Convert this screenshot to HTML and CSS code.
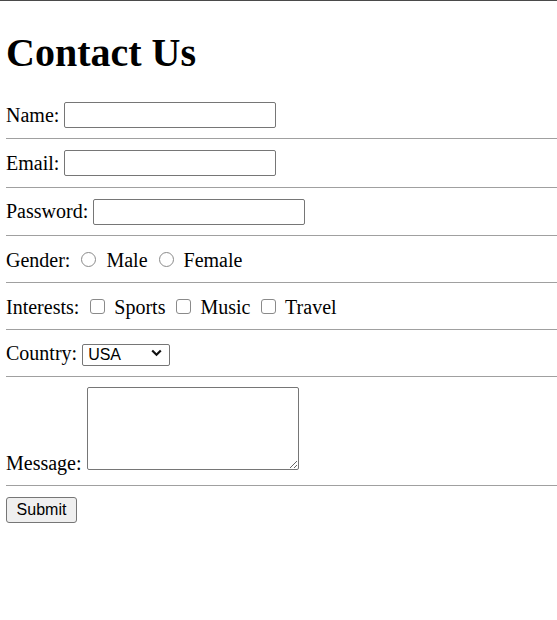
FILE: index.html
```html
<!DOCTYPE html>
<html lang="en">
<head>
<meta charset="utf-8">
<title>Contact Us</title>
<link rel="stylesheet" href="styles.css">
</head>
<body>
<h1 class="title">Contact Us</h1>
<form class="form">
  <div class="row row-name">
    <label class="lbl" for="name">Name:</label>
    <input class="text" id="name" type="text">
  </div>
  <div class="row row-email">
    <label class="lbl" for="email">Email:</label>
    <input class="text" id="email" type="email">
  </div>
  <div class="row row-pass">
    <label class="lbl" for="pw">Password:</label>
    <input class="text" id="pw" type="password">
  </div>
  <div class="row row-gender">
    <span class="lbl">Gender:</span>
    <label class="opt"><input class="radio" type="radio" name="g"> Male</label>
    <label class="opt"><input class="radio" type="radio" name="g"> Female</label>
  </div>
  <div class="row row-int">
    <span class="lbl">Interests:</span>
    <label class="opt"><input class="check" type="checkbox"> Sports</label>
    <label class="opt"><input class="check" type="checkbox"> Music</label>
    <label class="opt"><input class="check" type="checkbox"> Travel</label>
  </div>
  <div class="row row-country">
    <label class="lbl" for="country">Country:</label>
    <span class="select-wrap">
      <select class="select" id="country">
        <option>USA</option>
        <option>Canada</option>
        <option>UK</option>
      </select>
      <svg class="chev" width="11" height="8" viewBox="0 0 11 8"><path d="M1.2 1.5 L5.5 5.8 L9.8 1.5" fill="none" stroke="#111" stroke-width="2.2"/></svg>
    </span>
  </div>
  <div class="row row-msg">
    <label class="lbl lbl-msg" for="msg">Message:</label>
    <textarea class="area" id="msg"></textarea>
  </div>
  <button class="btn" type="submit">Submit</button>
</form>
</body>
</html>
```
FILE: styles.css
```css
html {
  background: #fff;
}
body {
  margin: 0;
  border-top: 1px solid #4a4a4a;
  padding-left: 6px;
  font-family: "Liberation Serif", "Times New Roman", serif;
  font-size: 20px;
  color: #000;
}
.title {
  margin: 29px 0 16px;
  font-size: 40px;
  font-weight: bold;
  line-height: 46px;
}
.form {
  margin: 0;
}
.row {
  box-sizing: border-box;
  display: flex;
  align-items: center;
  border-bottom: 1px solid #a0a0a0;
}
.row-name { height: 47px; }
.row-email { height: 49px; }
.row-pass { height: 48px; }
.row-gender { height: 47px; padding-top: 2px; }
.row-int { height: 47px; padding-top: 2px; }
.row-country { height: 47px; }
.row-msg {
  height: 109px;
  align-items: flex-end;
  padding: 9px 0 15px;
}
.lbl {
  line-height: 23px;
  white-space: pre;
}
.lbl-msg {
  margin-bottom: -5px;
}
.opt {
  line-height: 23px;
  margin-left: 5px;
}
.text {
  box-sizing: border-box;
  margin: 0 0 0 5px;
  width: 212px;
  height: 26px;
  padding: 1px 2px;
  border: 1px solid #767676;
  border-radius: 2px;
  background: #fff;
  font-family: "Liberation Sans", Arial, sans-serif;
  font-size: 16px;
}
.radio {
  -webkit-appearance: none;
  appearance: none;
  box-sizing: border-box;
  width: 15px;
  height: 15px;
  margin: 0 5px 0 6px;
  border: 1px solid #8a8a8a;
  border-radius: 50%;
  background: #fff;
  vertical-align: baseline;
}
.check {
  -webkit-appearance: none;
  appearance: none;
  box-sizing: border-box;
  width: 15px;
  height: 15px;
  margin: 0 4px 0 6px;
  border: 1px solid #8a8a8a;
  border-radius: 3px;
  background: #fff;
  vertical-align: baseline;
}
.select-wrap {
  position: relative;
  display: inline-block;
  margin-left: 5px;
  height: 22px;
}
.select {
  -webkit-appearance: none;
  appearance: none;
  box-sizing: border-box;
  width: 88px;
  height: 22px;
  margin: 0;
  padding: 0 0 0 5px;
  border: 1px solid #767676;
  border-radius: 2px;
  background: #fff;
  color: #000;
  font-family: "Liberation Sans", Arial, sans-serif;
  font-size: 16px;
  line-height: 20px;
}
.chev {
  position: absolute;
  left: 69px;
  top: 7px;
  pointer-events: none;
}
.area {
  box-sizing: border-box;
  margin: 0 0 0 5px;
  width: 212px;
  height: 83px;
  padding: 2px;
  border: 1px solid #767676;
  border-radius: 2px;
  background: #fff;
  font-family: "Liberation Mono", monospace;
  font-size: 16px;
}
.btn {
  box-sizing: border-box;
  margin: 11px 0 0;
  width: 71px;
  height: 26px;
  padding: 0;
  border: 1px solid #767676;
  border-radius: 3px;
  background: #efefef;
  color: #000;
  font-family: "Liberation Sans", Arial, sans-serif;
  font-size: 16px;
}
```
